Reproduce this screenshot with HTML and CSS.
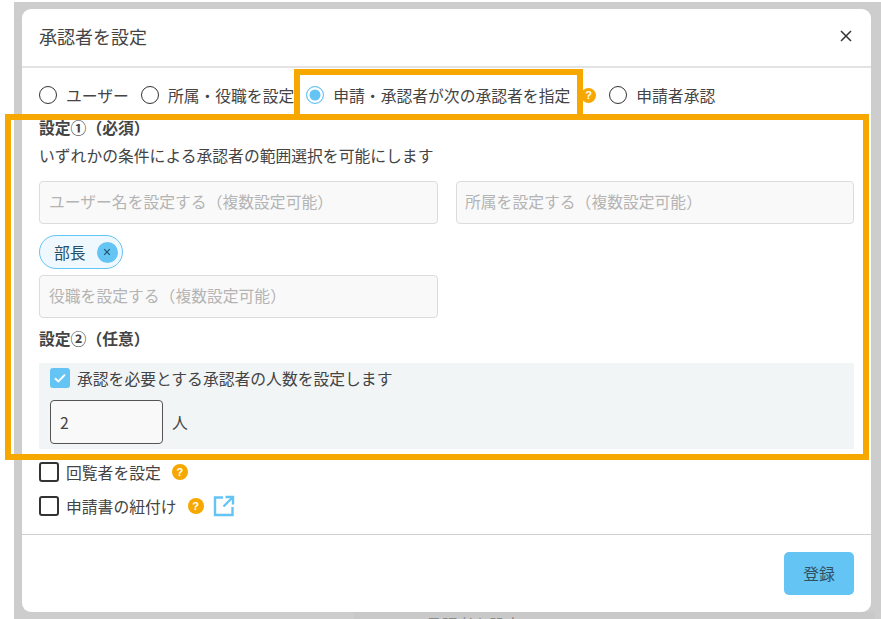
FILE: index.html
```html
<!DOCTYPE html>
<html lang="ja">
<head>
<meta charset="utf-8">
<title>承認者を設定</title>
<link rel="stylesheet" href="styles.css">
</head>
<body>
<div class="backdrop">
  <div class="page-ghost"><span class="ghost-text">承認者を設定</span></div>
  <div class="modal">
    <header class="modal-head">
      <h1 class="modal-title">承認者を設定</h1>
      <svg class="close" width="12" height="12" viewBox="0 0 12 12"><path d="M1 1L11 11M11 1L1 11" stroke="#333" stroke-width="1.5" fill="none"/></svg>
    </header>
    <div class="radios">
      <label class="radio"><span class="radio-dot"></span>ユーザー</label>
      <label class="radio"><span class="radio-dot"></span>所属・役職を設定</label>
      <label class="radio radio-on"><span class="radio-dot"></span>申請・承認者が次の承認者を指定</label>
      <span class="help help-radio">?</span>
      <label class="radio"><span class="radio-dot"></span>申請者承認</label>
    </div>
    <section class="settings">
      <h2 class="label">設定①（必須）</h2>
      <p class="desc">いずれかの条件による承認者の範囲選択を可能にします</p>
      <div class="field-grid">
        <div class="input">ユーザー名を設定する（複数設定可能）</div>
        <div class="input input-right">所属を設定する（複数設定可能）</div>
        <div class="role-col">
          <span class="chip">部長<span class="chip-x"><svg width="8" height="8" viewBox="0 0 8 8"><path d="M1.2 1.2L6.8 6.8M6.8 1.2L1.2 6.8" stroke="#24506a" stroke-width="1.2" fill="none"/></svg></span></span>
          <div class="input">役職を設定する（複数設定可能）</div>
        </div>
      </div>
      <h2 class="label label-2">設定②（任意）</h2>
      <div class="count-panel">
        <div class="count-check">
          <span class="check check-on"><svg width="14" height="12" viewBox="0 0 14 12"><path d="M2 6.2L5.4 9.4L12 2.6" stroke="#fff" stroke-width="2" fill="none"/></svg></span>
          承認を必要とする承認者の人数を設定します
        </div>
        <div class="count-row">
          <div class="count-input">2</div>
          <span>人</span>
        </div>
      </div>
    </section>
    <div class="options">
      <div class="option"><span class="check"></span>回覧者を設定<span class="help help-1">?</span></div>
      <div class="option"><span class="check"></span>申請書の紐付け<span class="help help-2">?</span>
        <svg class="ext" width="22" height="22" viewBox="0 0 22 22"><path d="M10 2.5H2V20H19.5V12M12.5 2H20V9.5M20 2L10.5 11.5" stroke="#64c4f4" stroke-width="2.4" fill="none"/></svg>
      </div>
    </div>
    <footer class="modal-foot"><button class="submit">登録</button></footer>
  </div>
  <div class="mark mark-radio"></div>
  <div class="mark mark-settings"></div>
</div>
</body>
</html>
```

FILE: styles.css
```css
* { box-sizing: border-box; }
html, body { margin: 0; height: 100%; background: #fff; }
body {
  width: 881px;
  height: 619px;
  overflow: hidden;
  padding: 2px 0 0 14px;
  font-family: "Noto Sans CJK JP", "Noto Sans", sans-serif;
  color: #444;
  font-size: 15.8px;
}
.backdrop {
  position: relative;
  width: 867px;
  height: 617px;
  background: #cdcdcd;
  padding: 7px 10px 7px 8px;
}
.page-ghost {
  position: absolute;
  left: 340px;
  right: 6px;
  bottom: 0;
  height: 7px;
  overflow: hidden;
  background: #c9c9c9;
}
.ghost-text { position: absolute; left: 72px; top: 1px; color: #8a8a8a; }
.modal {
  position: relative;
  width: 849px;
  height: 603px;
  background: #fff;
  border-radius: 9px;
  display: flex;
  flex-direction: column;
}
.modal-head {
  height: 59px;
  flex: none;
  display: flex;
  align-items: center;
  justify-content: space-between;
  padding: 0 19px 4px 17px;
  border-bottom: 2px solid #e3e3e3;
}
.modal-title { margin: 0; font-size: 18px; font-weight: 400; color: #444; }
.radios {
  display: flex;
  align-items: center;
  height: 50px;
  padding: 4px 0 0 17px;
  flex: none;
}
.radio { display: flex; align-items: center; gap: 9px; margin-right: 12px; white-space: nowrap; }
.radio-dot {
  width: 18px;
  height: 18px;
  border-radius: 50%;
  border: 1.5px solid #333;
  background: #fff;
  flex: none;
}
.radio-on { margin-right: 11px; }
.radio-on .radio-dot {
  border-color: #64c4f4;
  background: #64c4f4;
  box-shadow: inset 0 0 0 2.5px #fff;
}
.help {
  width: 15px;
  height: 15px;
  border-radius: 50%;
  background: #f6a800;
  color: #fff;
  font-size: 11px;
  font-weight: 700;
  line-height: 15px;
  text-align: center;
  flex: none;
  font-family: "Liberation Sans", sans-serif;
}
.help-radio { margin-right: 13px; }
.settings { padding: 0 17px; flex: none; }
.label { margin: 0; font-size: 15.8px; line-height: 20px; font-weight: 700; color: #444; }
.desc { margin: 8px 0 0; line-height: 20px; }
.field-grid {
  display: grid;
  grid-template-columns: 399px 398px;
  column-gap: 18px;
  row-gap: 11px;
  margin-top: 15px;
}
.input {
  height: 43px;
  border: 1px solid #dcdcdc;
  border-radius: 4px;
  background: #f9f9f9;
  padding: 0 9px 2px;
  display: flex;
  align-items: center;
  color: #b4b4b4;
}
.input-right { padding-left: 8px; }
.role-col { display: flex; flex-direction: column; align-items: flex-start; gap: 6px; grid-column: 1; }
.role-col .input { width: 100%; }
.chip {
  height: 34px;
  width: 84px;
  border: 1px solid #64c4f4;
  border-radius: 17px;
  background: #eff8fe;
  display: flex;
  align-items: center;
  padding-left: 14px;
  gap: 11px;
  color: #24506a;
}
.chip-x {
  width: 21px;
  height: 21px;
  border-radius: 50%;
  background: #64c4f4;
  display: flex;
  align-items: center;
  justify-content: center;
}
.label-2 { margin-top: 11px; }
.count-panel {
  margin-top: 14px;
  background: #f1f5f6;
  height: 86px;
  padding: 5px 11px;
}
.count-check { display: flex; align-items: center; gap: 7px; height: 20px; }
.check {
  width: 20px;
  height: 20px;
  border: 2px solid #333;
  border-radius: 3px;
  background: #fff;
  flex: none;
  display: flex;
  align-items: center;
  justify-content: center;
}
.check-on { border: none; background: #64c4f4; }
.count-row { display: flex; align-items: center; gap: 9px; margin-top: 12px; }
.count-input {
  width: 113px;
  height: 44px;
  border: 1px solid #555;
  border-radius: 4px;
  background: #f9f9f9;
  padding: 0 9px;
  display: flex;
  align-items: center;
}
.options { padding: 13px 17px 0; flex: none; }
.option { display: flex; align-items: center; height: 20px; gap: 6px; margin-bottom: 14px; }
.option .check { margin-right: 1px; }
.option .help { width: 16px; height: 16px; line-height: 16px; margin-left: 5px; }
.ext { margin-left: 3px; }
.modal-foot {
  margin-top: auto;
  height: 78px;
  flex: none;
  border-top: 1px solid #cfcfcf;
  display: flex;
  justify-content: flex-end;
  padding: 17px 17px 0 0;
}
.submit {
  width: 70px;
  height: 43px;
  border: none;
  border-radius: 5px;
  background: #64c4f4;
  color: #33505f;
  font: inherit;
}
.mark { position: absolute; border: 6px solid #f6a800; pointer-events: none; }
.mark-radio { left: 280px; top: 67px; width: 289px; height: 51px; }
.mark-settings { left: -9px; top: 112px; width: 864px; height: 346px; }
```
